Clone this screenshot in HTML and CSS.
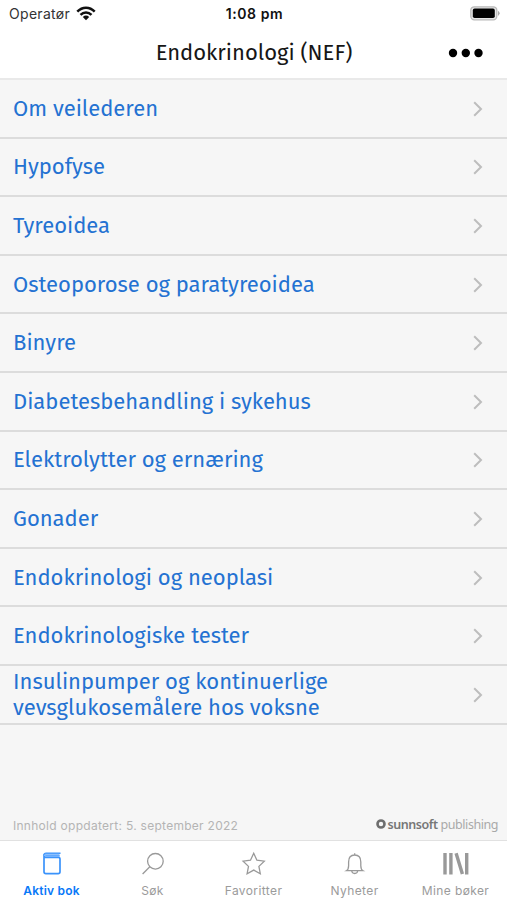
FILE: index.html
```html
<!DOCTYPE html>
<html lang="nb">
<head>
<meta charset="utf-8">
<title>Endokrinologi (NEF)</title>
<link rel="stylesheet" href="styles.css">
</head>
<body>
<div class="app">
  <header class="header">
    <div class="status">
      <div class="carrier"><span>Operatør</span>
        <svg width="20" height="16" viewBox="0 0 20 16"><g fill="none" stroke="#111" stroke-width="2.5"><path d="M1.3 5.6C6.3.3 13.7.3 18.7 5.6"/><path d="M4.5 8.8C7.7 5.6 12.3 5.6 15.5 8.8"/></g><path d="M6.8 10.9q3.2-2.6 6.4 0L10 14.3z" fill="#111"/></svg>
      </div>
      <div class="time">1:08 pm</div>
      <svg class="battery" width="30" height="15" viewBox="0 0 30 15"><rect x=".8" y=".8" width="26" height="13" rx="3.5" fill="#e6e6e6" stroke="#b9b9b9" stroke-width="1.3"/><rect x="2.8" y="2.6" width="22" height="9.4" rx="1.8" fill="#000"/><path d="M28 4.7q3.3 2.7 0 5.2z" fill="#aaa"/></svg>
    </div>
    <div class="titlebar">
      <h1>Endokrinologi (NEF)</h1>
      <svg class="more" width="36" height="10" viewBox="0 0 36 10"><circle cx="5" cy="5" r="4.2"/><circle cx="17.8" cy="5" r="4.2"/><circle cx="30.5" cy="5" r="4.2"/></svg>
    </div>
  </header>
  <main class="content">
    <ul class="chapters">
      <li><span>Om veilederen</span><svg class="chevron" viewBox="0 0 10 16"><path d="M1.2 1.3 8 8l-6.8 6.7"/></svg></li>
      <li><span>Hypofyse</span><svg class="chevron" viewBox="0 0 10 16"><path d="M1.2 1.3 8 8l-6.8 6.7"/></svg></li>
      <li><span>Tyreoidea</span><svg class="chevron" viewBox="0 0 10 16"><path d="M1.2 1.3 8 8l-6.8 6.7"/></svg></li>
      <li><span>Osteoporose og paratyreoidea</span><svg class="chevron" viewBox="0 0 10 16"><path d="M1.2 1.3 8 8l-6.8 6.7"/></svg></li>
      <li><span>Binyre</span><svg class="chevron" viewBox="0 0 10 16"><path d="M1.2 1.3 8 8l-6.8 6.7"/></svg></li>
      <li><span>Diabetesbehandling i sykehus</span><svg class="chevron" viewBox="0 0 10 16"><path d="M1.2 1.3 8 8l-6.8 6.7"/></svg></li>
      <li><span>Elektrolytter og ernæring</span><svg class="chevron" viewBox="0 0 10 16"><path d="M1.2 1.3 8 8l-6.8 6.7"/></svg></li>
      <li><span>Gonader</span><svg class="chevron" viewBox="0 0 10 16"><path d="M1.2 1.3 8 8l-6.8 6.7"/></svg></li>
      <li><span>Endokrinologi og neoplasi</span><svg class="chevron" viewBox="0 0 10 16"><path d="M1.2 1.3 8 8l-6.8 6.7"/></svg></li>
      <li><span>Endokrinologiske tester</span><svg class="chevron" viewBox="0 0 10 16"><path d="M1.2 1.3 8 8l-6.8 6.7"/></svg></li>
      <li><span>Insulinpumper og kontinuerlige<br>vevsglukosemålere hos voksne</span><svg class="chevron" viewBox="0 0 10 16"><path d="M1.2 1.3 8 8l-6.8 6.7"/></svg></li>
    </ul>
    <div class="meta">
      <span class="updated">Innhold oppdatert: 5. september 2022</span>
      <span class="brand"><svg width="10" height="10" viewBox="0 0 10 10"><circle cx="5" cy="5" r="3.5" fill="none" stroke="#6e6e6e" stroke-width="2.6"/></svg><b>sunnsoft</b><span>publishing</span></span>
    </div>
  </main>
  <nav class="tabs">
    <a class="tab active"><svg viewBox="0 0 28 28"><path d="M6 5.5v16.3q0 1.9 1.9 1.9h12.2q1.9 0 1.9-1.9V9.3q0-1.9-1.5-1.9H8Q6 7.4 6 5.5Z" fill="none" stroke="#3b93fb" stroke-width="1.7"/><path d="M5.6 5.8Q5.6 3.3 8.2 3.3H22.500M7.5 5.6H21.5" fill="none" stroke="#3b93fb" stroke-width="1.4"/><path d="M7 3.500H21.500V7H7z" fill="#6fb0fe" opacity=".8"/></svg><span>Aktiv bok</span></a>
    <a class="tab search"><svg viewBox="0 0 28 28"><circle cx="16.4" cy="11.3" r="7.8"/><path d="m10.8 16.8-7.2 7.2"/></svg><span>Søk</span></a>
    <a class="tab favorites"><svg viewBox="0 0 28 28"><path d="m13.7 3.3 3.2 6.9 7.4 1-5.4 5.2 1.4 7.3-6.6-3.6-6.6 3.6 1.4-7.3-5.4-5.2 7.4-1z"/></svg><span>Favoritter</span></a>
    <a class="tab news"><svg viewBox="0 0 28 28"><path d="M13.7 3.3v1.700M5.4 20.700q2.2-1.3 2.2-5v-3.8q0-6.9 6.1-6.9t6.1 6.9v3.8q0 3.7 2.2 5zM10.700 21q.4 2.5 3 2.5t3-2.5"/></svg><span>Nyheter</span></a>
    <a class="tab books"><svg viewBox="0 0 28 28"><path d="M3 3v21.500M8.900 3v21.500M14.100 3.200l6.300 20.900M24.700 3v21.500" stroke-width="3.4"/></svg><span>Mine bøker</span></a>
  </nav>
</div>
</body>
</html>
```

FILE: styles.css
```css
* { box-sizing: border-box; }
body { margin: 0; background: #f6f6f6; font-family: Inter, "Liberation Sans", sans-serif; }
.app { width: 507px; height: 900px; display: flex; flex-direction: column; overflow: hidden; }
svg { display: block; flex: none; }

.header { height: 80px; flex: none; background: #fff; border-bottom: 2px solid #e9e9e9; }
.status { height: 28px; display: grid; grid-template-columns: 1fr auto 1fr; align-items: center; padding: 0 7px 0 9px; font-size: 14px; color: #333; }
.carrier { display: flex; align-items: center; gap: 6px; letter-spacing: .3px; margin-top: -1px; }
.time { font-weight: 600; font-size: 14px; color: #111; letter-spacing: .6px; margin: -1px 0 0; }
.battery { justify-self: end; margin-top: -1px; }
.titlebar { height: 50px; display: grid; grid-template-columns: 1fr auto 1fr; align-items: center; padding: 0 22px 0 23px; }
h1 { grid-column: 2; margin: 0; font: 400 22px/28px "Fira Sans", "Open Sans", sans-serif; color: #161616; }
.more { justify-self: end; fill: #000; margin: -1px 1px 0 0; }

.content { flex: 1; min-height: 0; display: flex; flex-direction: column; justify-content: space-between; }
.chapters { list-style: none; margin: 0; padding: 0; height: 644.6px; display: grid; grid-template-rows: repeat(11, 1fr); }
.chapters li { display: flex; align-items: center; justify-content: space-between; padding: 1px 24.5px 0 13px; border-bottom: 2px solid #dcdcdc; min-height: 0; font: 400 22px/26px "Fira Sans", "Open Sans", sans-serif; color: #2472d2; white-space: nowrap; }
.chevron { width: 10px; height: 16px; fill: none; stroke: #bdbdbd; stroke-width: 2; }

.meta { display: flex; align-items: center; justify-content: space-between; height: 30px; padding: 0 9px 0 13px; }
.updated { font-size: 12px; color: #b4b4b4; letter-spacing: .28px; }
.brand { display: flex; align-items: center; font: 12.5px "Noto Sans", sans-serif; letter-spacing: -.45px; color: #a9a9a9; margin-top: -2px; }
.brand b { font-weight: 600; color: #777; margin: 0 3px 0 2px; }

.tabs { height: 60px; flex: none; display: grid; grid-template-columns: repeat(5, 101px); justify-content: center; background: #fff; border-top: 1px solid #e1e1e1; }
.tab { display: flex; flex-direction: column; align-items: center; padding-top: 9px; font-size: 12px; line-height: 16px; color: #9b9b9b; letter-spacing: .4px; gap: 5px; }
.tab svg { width: 28px; height: 28px; fill: none; stroke: #999; stroke-width: 1.3; }
.tab.active { color: #0878f8; font-weight: 600; letter-spacing: .2px; }
.tab.active svg { stroke: none; }
```
